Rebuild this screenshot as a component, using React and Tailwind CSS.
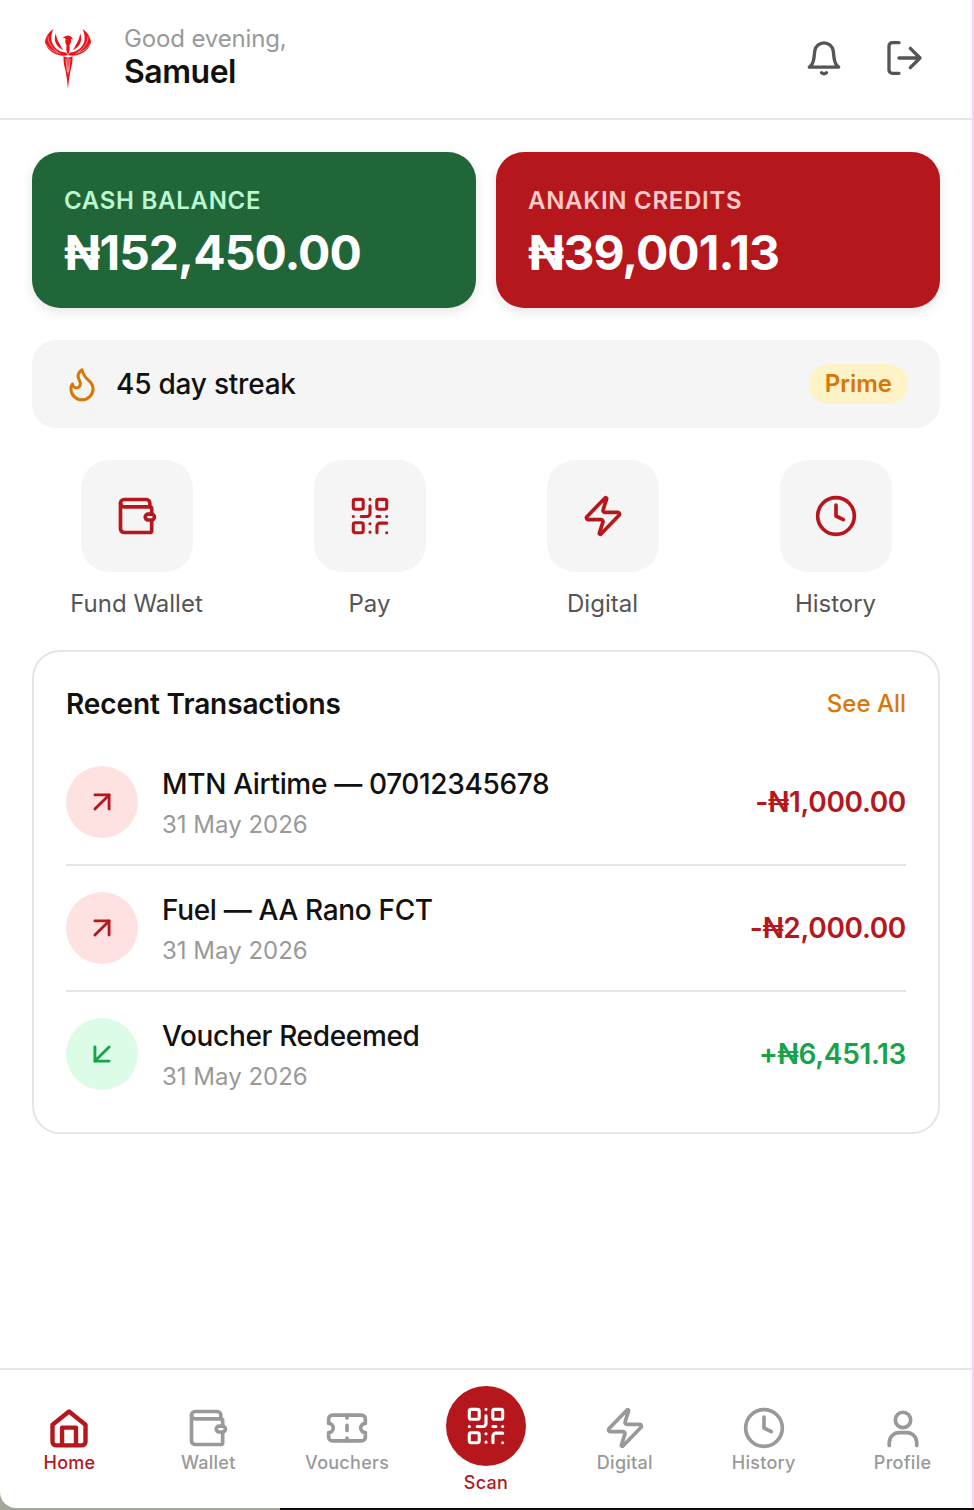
import React from 'react';
import { ArrowDownLeft, ArrowUpRight, Clock, Flame, Zap } from 'lucide-react';

// Hand-drawn icons that the icon package doesn't carry in this shape
const Svg = ({ size = 44, strokeWidth = 2, className = '', children }) => (
  <svg
    width={size}
    height={size}
    viewBox="0 0 24 24"
    fill="none"
    stroke="currentColor"
    strokeWidth={strokeWidth}
    strokeLinecap="round"
    strokeLinejoin="round"
    className={className}
  >
    {children}
  </svg>
);

const WalletIcon = (props) => (
  <Svg {...props}>
    <path d="M19 7V5a2 2 0 0 0-2-2H5a2 2 0 0 0-2 2v14a2 2 0 0 0 2 2h14a1 1 0 0 0 1-1v-5" />
    <path d="M3 5a2 2 0 0 0 2 2h14a1 1 0 0 1 1 1v3" />
    <rect x="16.500" y="11" width="5" height="3.200" rx="1.600" />
  </Svg>
);

const QrIcon = ({ size = 44 }) => (
  <Svg size={size} strokeWidth={1.7}>
    <rect x="2.900" y="2.900" width="5.400" height="5.400" rx="1" />
    <rect x="15.700" y="2.900" width="5.400" height="5.400" rx="1" />
    <rect x="2.900" y="15.700" width="5.400" height="5.400" rx="1" />
    <path d="M12 2.900h.01M12 6.500v4.200a1.600 1.600 0 0 1-1.600 1.600H7.200" />
    <path d="M2.900 12.300h.01M15.800 12.300h1.600M21.100 12.300h.01M12 16.200h.01M12 20.800h.01M21.100 21.100h.01" />
    <path d="M15.800 21.100v-3.600a1.600 1.600 0 0 1 1.600-1.600h3.700" />
  </Svg>
);

const HomeIcon = (props) => (
  <Svg {...props}>
    <path d="M3 10.200 12 3l9 7.200V19.500a2 2 0 0 1-2 2H5a2 2 0 0 1-2-2Z" />
    <path d="M8.200 21v-9.200h7.600V21" />
  </Svg>
);

const TicketIcon = (props) => (
  <Svg {...props}>
    <path d="M4 5h16a2 2 0 0 1 2 2v2.500a2.500 2.500 0 0 0 0 5V17a2 2 0 0 1-2 2H4a2 2 0 0 1-2-2v-2.500a2.500 2.500 0 0 0 0-5V7a2 2 0 0 1 2-2Z" />
    <path d="M12 5v1.500M12 10.500v3M12 17.500V19" />
  </Svg>
);

const PersonIcon = (props) => (
  <Svg {...props}>
    <circle cx="12" cy="7.600" r="4.200" />
    <path d="M4.500 21.500V20a5.500 5.500 0 0 1 5.500-5.500h4a5.500 5.500 0 0 1 5.500 5.500v1.500" />
  </Svg>
);

const BellIcon = (props) => (
  <Svg {...props}>
    <path d="M3.200 17.500c1.500-1 2.300-2.600 2.700-5L6.500 7.500a5.600 5.600 0 0 1 11 0l.6 5c.4 2.400 1.200 4 2.700 5Z" />
    <path d="M10.500 20.800c.9.900 2.100.900 3 0" />
  </Svg>
);

const LogoutIcon = (props) => (
  <Svg {...props}>
    <path d="M9 2.800H5a2 2 0 0 0-2 2v14.400a2 2 0 0 0 2 2h4" />
    <path d="M9 12h12.400M15.800 6.200l5.800 5.800-5.800 5.800" />
  </Svg>
);

// Phoenix mark: one wing is drawn and mirrored
const PhoenixLogo = () => {
  const wing = (
    <>
      <path d="M8.300 1.300C3.500 4 .8 9 0 14c1 5 5 10 12 12.500 4 1.400 8 1.500 11 .5l-2-2.500C15 24.500 9 20 6.800 14 5.800 10 6.500 5 8.300 1.300Z" />
      <path d="M10.800 5.500c-1.600 4-1.300 8 1 11.500 1.800 2.500 4 4 6.500 5-1.300-1.500-2.500-3.500-3.300-5.500-1.800-2.500-3.500-6.500-4.200-11Z" />
      <path d="M3 8.500C3 15 7 20.500 13 24M.8 16C4 21 9 24.300 15.500 25.600" stroke="#fff" strokeWidth=".5" fill="none" />
    </>
  );
  return (
    <svg width="46" height="61" viewBox="0 0 46 61" fill="#ea1119">
      {wing}
      <g transform="matrix(-1 0 0 1 46 0)">{wing}</g>
      <path d="M17.500 9.800c1.800-1.300 3.800-2.300 6-2.300 2 .3 3.500 1.800 4.500 3.800l-2-.4c.3 2.600-.3 4.600-1.700 6.600.9 3 .4 6-1.300 9.500-1.700-3.500-2.200-6.500-1.300-9.500-1.400-2-1.800-4.500-1-6.600-1-.8-2-1-3.200-1.100Z" />
      <path d="M18.500 28c1 .900 2.800 1.500 4.500 1.500s3.500-.600 4.500-1.500c.2 5-.6 9.500-1.800 14-1 4-2 11-2.700 19-.7-8-1.700-15-2.700-19-1.200-4.500-2-9-1.800-14Z" />
      <path d="M21 31l1.300 13M25 31l-1.300 13M23 30v16" stroke="#fff" strokeWidth=".6" fill="none" />
    </svg>
  );
};

const quickActions = [
  { label: 'Fund Wallet', Icon: WalletIcon },
  { label: 'Pay', Icon: QrIcon },
  { label: 'Digital', Icon: Zap },
  { label: 'History', Icon: Clock },
];

const transactions = [
  { title: 'MTN Airtime — 07012345678', date: '31 May 2026', amount: '-₦1,000.00', credit: false },
  { title: 'Fuel — AA Rano FCT', date: '31 May 2026', amount: '-₦2,000.00', credit: false },
  { title: 'Voucher Redeemed', date: '31 May 2026', amount: '+₦6,451.13', credit: true },
];

const navItems = [
  { label: 'Home', Icon: HomeIcon, active: true },
  { label: 'Wallet', Icon: WalletIcon },
  { label: 'Vouchers', Icon: TicketIcon },
  { label: 'Scan', scan: true },
  { label: 'Digital', Icon: Zap },
  { label: 'History', Icon: Clock },
  { label: 'Profile', Icon: PersonIcon },
];

const BalanceCard = ({ label, amount, cardClass, labelClass }) => (
  <div className={`h-[156px] rounded-[28px] pl-8 pt-[33px] shadow-[0_4px_12px_rgba(0,0,0,0.1)] ${cardClass}`}>
    <p className={`text-[24px] leading-[32px] font-semibold tracking-[0.03em] ${labelClass}`}>{label}</p>
    <p className="mt-[6px] text-[48px] leading-[60px] font-bold tracking-[-0.02em] text-white">{amount}</p>
  </div>
);

const TransactionRow = ({ title, date, amount, credit, last }) => (
  <div className={`flex items-center ${last ? 'h-[124px]' : 'h-[126px] border-b-2 border-[#e5e5e5]'}`}>
    <div className={`flex h-[72px] w-[72px] shrink-0 items-center justify-center rounded-full ${credit ? 'bg-[#dcfce7] text-[#16a34a]' : 'bg-[#fee2e2] text-[#b5171c]'}`}>
      {credit ? <ArrowDownLeft size={34} strokeWidth={2} /> : <ArrowUpRight size={34} strokeWidth={2} />}
    </div>
    <div className="ml-6 flex-1 pt-[2px]">
      <p className="text-[28px] leading-[38px] font-medium tracking-[-0.012em] text-[#111111]">{title}</p>
      <p className="mt-[6px] text-[24px] leading-[32px] text-[#999999]">{date}</p>
    </div>
    <p className={`text-[28px] leading-[38px] font-semibold tracking-[-0.012em] ${credit ? 'text-[#16a34a]' : 'text-[#b5171c]'}`}>{amount}</p>
  </div>
);

const NavItem = ({ label, Icon, active, scan }) => {
  if (scan) {
    return (
      <div className="flex flex-col items-center pt-4">
        <div className="flex h-20 w-20 items-center justify-center rounded-full bg-[#b5171c] text-white">
          <QrIcon />
        </div>
        <span className="mt-[5px] text-[18px] leading-[24px] font-medium tracking-[0.015em] text-[#b5171c]">{label}</span>
      </div>
    );
  }
  return (
    <div className={`flex flex-col items-center pt-9 ${active ? 'text-[#b5171c]' : 'text-[#999999]'}`}>
      <Icon size={44} strokeWidth={active ? 2.4 : 2} />
      <span className="mt-[1px] text-[18px] leading-[24px] font-medium tracking-[0.015em]">{label}</span>
    </div>
  );
};

export default function App() {
  return (
    <div className="flex h-[1510px] w-[974px] bg-[linear-gradient(90deg,#a3a899_0,#a3a899_280px,#0c0c0c_280px)] font-['Inter',sans-serif]">
      <div className="flex h-[1508px] w-[972px] flex-col rounded-bl-[16px] bg-white">
        {/* Greeting bar */}
        <header className="flex h-[120px] items-center border-b-2 border-[#e5e5e5] pb-[2px] pl-[45px] pr-12">
          <PhoenixLogo />
          <div className="mb-[2px] ml-[33px] flex-1">
            <p className="text-[24px] leading-[30px] tracking-[-0.006em] text-[#999999]">Good evening,</p>
            <p className="text-[32px] leading-[36px] font-semibold tracking-[-0.015em] text-[#111111]">Samuel</p>
          </div>
          <div className="flex items-center gap-10 text-[#555555]">
            <BellIcon size={40} />
            <LogoutIcon size={40} />
          </div>
        </header>

        <main className="flex flex-1 flex-col px-8 pt-8">
          <div className="grid grid-cols-2 gap-5">
            <BalanceCard label="CASH BALANCE" amount="₦152,450.00" cardClass="bg-[#216639]" labelClass="text-[#bbf7d0]" />
            <BalanceCard label="ANAKIN CREDITS" amount="₦39,001.13" cardClass="bg-[#b5171c]" labelClass="text-[#fecaca]" />
          </div>

          {/* Streak */}
          <div className="mt-8 flex h-[88px] items-center justify-between rounded-[24px] bg-[#f5f5f5] pl-8 pr-8">
            <div className="flex items-center gap-[15px]">
              <Flame size={38} strokeWidth={1.9} className="-ml-[1px] text-[#d97706]" />
              <span className="text-[28px] font-medium tracking-[-0.008em] text-[#111111]">45 day streak</span>
            </div>
            <span className="flex h-10 items-center rounded-full bg-[#fef3c7] px-4 text-[24px] font-semibold text-[#d97706]">Prime</span>
          </div>

          {/* Quick actions */}
          <div className="mt-8 grid grid-cols-4 gap-6">
            {quickActions.map(({ label, Icon }) => (
              <div key={label} className="flex flex-col items-center">
                <div className="flex h-28 w-28 items-center justify-center rounded-[28px] bg-[#f5f5f5] text-[#b5171c]">
                  <Icon size={44} strokeWidth={2} />
                </div>
                <span className="mt-4 text-[24px] leading-[32px] text-[#555555]">{label}</span>
              </div>
            ))}
          </div>

          {/* Recent transactions */}
          <section className="mt-[30px] h-[484px] rounded-[28px] border-2 border-[#e5e5e5] px-8 pt-[33px]">
            <div className="flex items-center justify-between">
              <h2 className="text-[28px] leading-[38px] font-semibold tracking-[-0.004em] text-[#111111]">Recent Transactions</h2>
              <span className="text-[24px] leading-[32px] font-medium text-[#d97706]">See All</span>
            </div>
            <div className="mt-[17px]">
              {transactions.map((tx, i) => (
                <TransactionRow key={tx.title} {...tx} last={i === transactions.length - 1} />
              ))}
            </div>
          </section>
        </main>

        {/* Bottom navigation */}
        <nav className="grid h-[140px] grid-cols-7 border-t-2 border-[#e5e5e5]">
          {navItems.map((item) => (
            <NavItem key={item.label} {...item} />
          ))}
        </nav>
      </div>
      <div className="h-[1508px] w-[2px] bg-[#f9d3ee]" />
    </div>
  );
}
